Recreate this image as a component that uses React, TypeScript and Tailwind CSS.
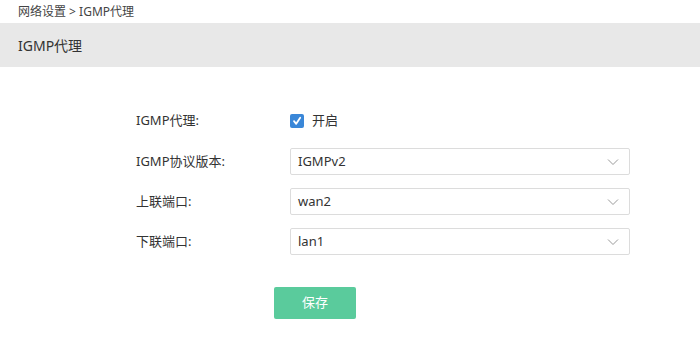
import React from "react";

const font = { fontFamily: '"Noto Sans", "Noto Sans CJK SC", sans-serif' };

function Select({ value }: { value: string }) {
  return (
    <div className="flex items-center justify-between w-[340px] h-[27px] border border-[#dcdcdc] rounded-[2px] bg-white pl-[7px] pr-[10px] text-[13px] text-[#333]">
      <span>{value}</span>
      <svg width="12" height="8" viewBox="0 0 12 8" fill="none">
        <path d="M1 1.5 L6 6.5 L11 1.5" stroke="#9a9a9a" strokeWidth="1" />
      </svg>
    </div>
  );
}

export default function App() {
  return (
    <div className="w-[700px] h-[342px] bg-white text-[#333]" style={font}>
      <div className="h-[23px] pl-[18px] flex items-center text-[12px] text-[#444]">
        网络设置 &gt; IGMP代理
      </div>
      <div className="h-[44px] bg-[#e8e8e8] pl-[18px] flex items-center text-[14px] text-[#333]">
        IGMP代理
      </div>
      <div className="pl-[136px] pt-[40px] flex flex-col text-[13px]">
        <div className="flex items-center h-[27px]">
          <div className="w-[154px]">IGMP代理:</div>
          <div className="flex items-center gap-[8px]">
            <div className="w-[14px] h-[14px] rounded-[2px] bg-[#3a87d8] flex items-center justify-center">
              <svg width="10" height="10" viewBox="0 0 10 10" fill="none">
                <path d="M2 5.2 L4.2 7.8 L8.2 1.8" stroke="white" strokeWidth="1.8" strokeLinecap="round" strokeLinejoin="round" />
              </svg>
            </div>
            <span>开启</span>
          </div>
        </div>
        <div className="flex items-center mt-[14px]">
          <div className="w-[154px]">IGMP协议版本:</div>
          <Select value="IGMPv2" />
        </div>
        <div className="flex items-center mt-[13px]">
          <div className="w-[154px]">上联端口:</div>
          <Select value="wan2" />
        </div>
        <div className="flex items-center mt-[13px]">
          <div className="w-[154px]">下联端口:</div>
          <Select value="lan1" />
        </div>
        <div className="pl-[138px] mt-[32px]">
          <button className="w-[82px] h-[32px] rounded-[2px] bg-[#5acb9c] text-white text-[13px]">保存</button>
        </div>
      </div>
    </div>
  );
}
